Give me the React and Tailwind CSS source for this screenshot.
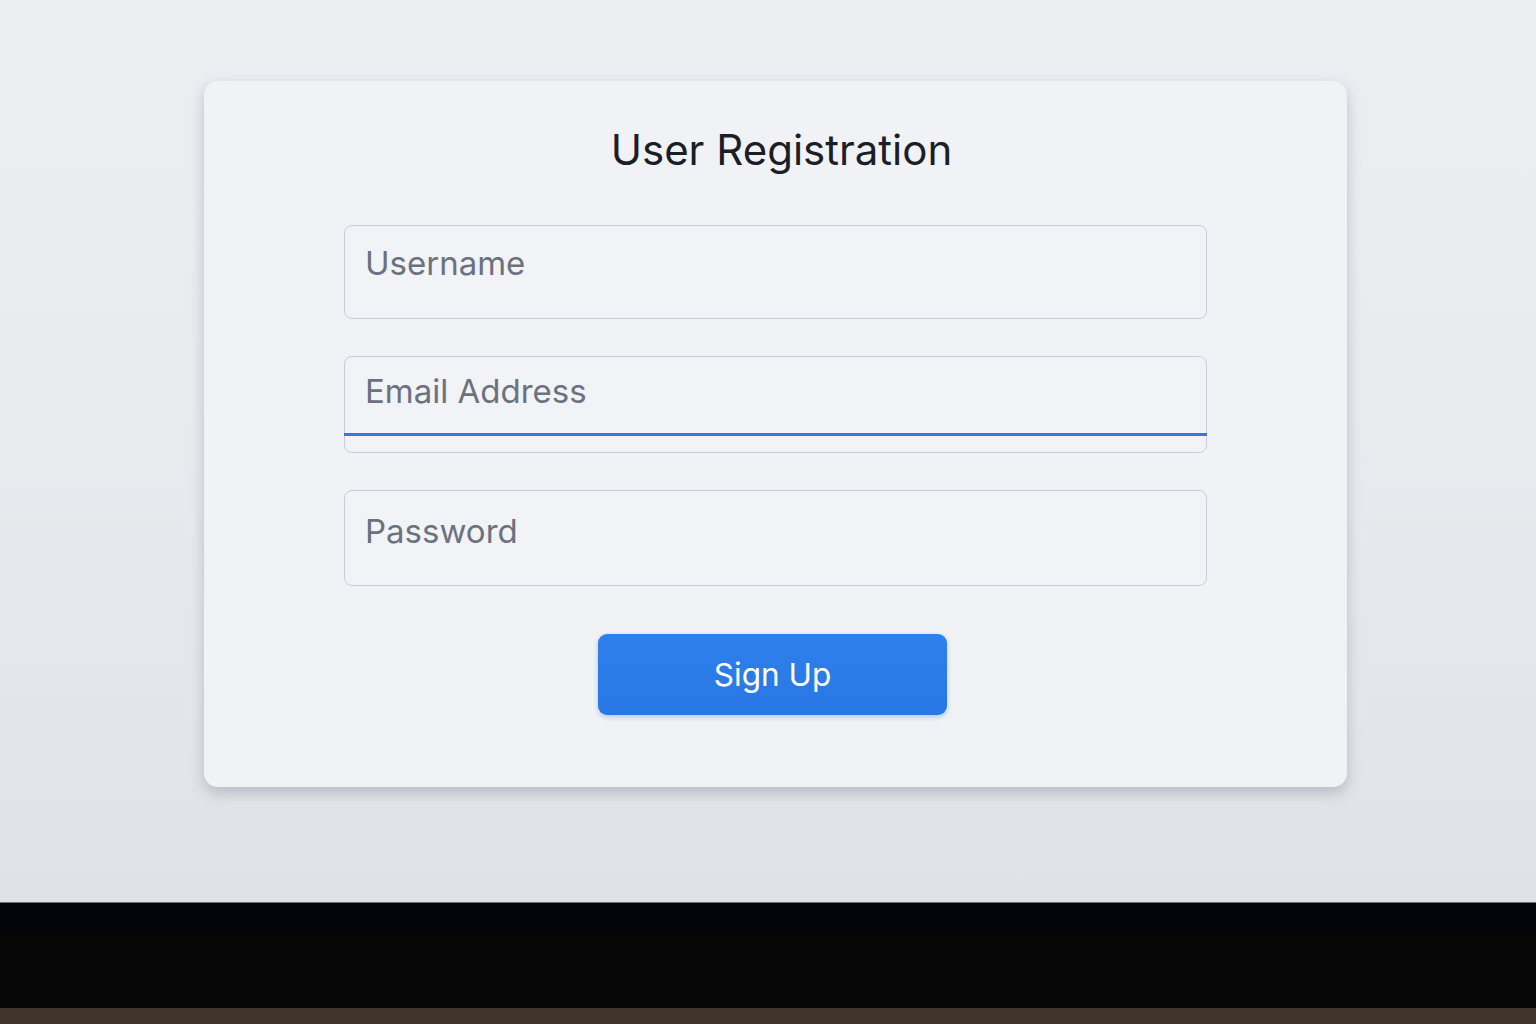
import React from 'react';

const fieldText = "w-full bg-transparent outline-none text-[33px] text-[#6b7180] placeholder:text-[#6b7180] px-5";

const App = () => {
  return (
    <div className="w-[1536px] h-[1024px] flex flex-col overflow-hidden" style={{ fontFamily: 'Inter, "Noto Sans", sans-serif' }}>
      {/* Screen */}
      <div className="h-[902px] bg-gradient-to-b from-[#eceef1] via-[#e8eaee] to-[#dfe2e6] pt-[81px]">
        <div className="ml-[204px] w-[1143px] h-[706px] rounded-[14px] bg-[#f0f2f5] shadow-[0_6px_14px_rgba(120,130,145,0.4)] flex flex-col pt-[45px]">
          <h1 className="pl-[12px] text-center text-[42px] leading-[48px] font-normal text-[#1b1e27]">User Registration</h1>

          <form className="ml-[140px] w-[863px] mt-[51px] flex flex-col" onSubmit={e => e.preventDefault()}>
            {/* Username */}
            <div className="h-[94px] rounded-[8px] border border-[#c9cdd4] bg-[#f1f3f6] flex pt-[18px]">
              <input type="text" placeholder="Username" className={`${fieldText} h-[40px]`} />
            </div>

            {/* Email */}
            <div className="mt-[37px] h-[97px] rounded-[8px] border border-[#c9cdd4] bg-[#f1f3f6] flex flex-col pt-[15px]">
              <input type="email" placeholder="Email Address" className={`${fieldText} h-[40px]`} />
              <div className="mt-[21px] h-[3px] -mx-px bg-[#2f7be0]" />
            </div>

            {/* Password */}
            <div className="mt-[37px] h-[96px] rounded-[8px] border border-[#c9cdd4] bg-[#f1f3f6] flex pt-[21px]">
              <input type="password" placeholder="Password" className={`${fieldText} h-[40px]`} />
            </div>

            <div className="mt-[48px] flex pl-[254px]">
              <button type="submit" className="w-[349px] h-[81px] rounded-[9px] bg-gradient-to-b from-[#2f80ec] to-[#2877e4] text-white text-[31.5px] shadow-[0_2px_5px_rgba(40,100,200,0.3)]">
                Sign Up
              </button>
            </div>
          </form>
        </div>
      </div>

      {/* Bezel */}
      <div className="h-px bg-[#6a6d72]" />
      <div className="h-[30px] bg-[#03050a]" />
      <div className="h-[75px] bg-[#060606]" />
      <div className="flex-1 bg-[#3e342b]" />
    </div>
  );
};

export default App;
